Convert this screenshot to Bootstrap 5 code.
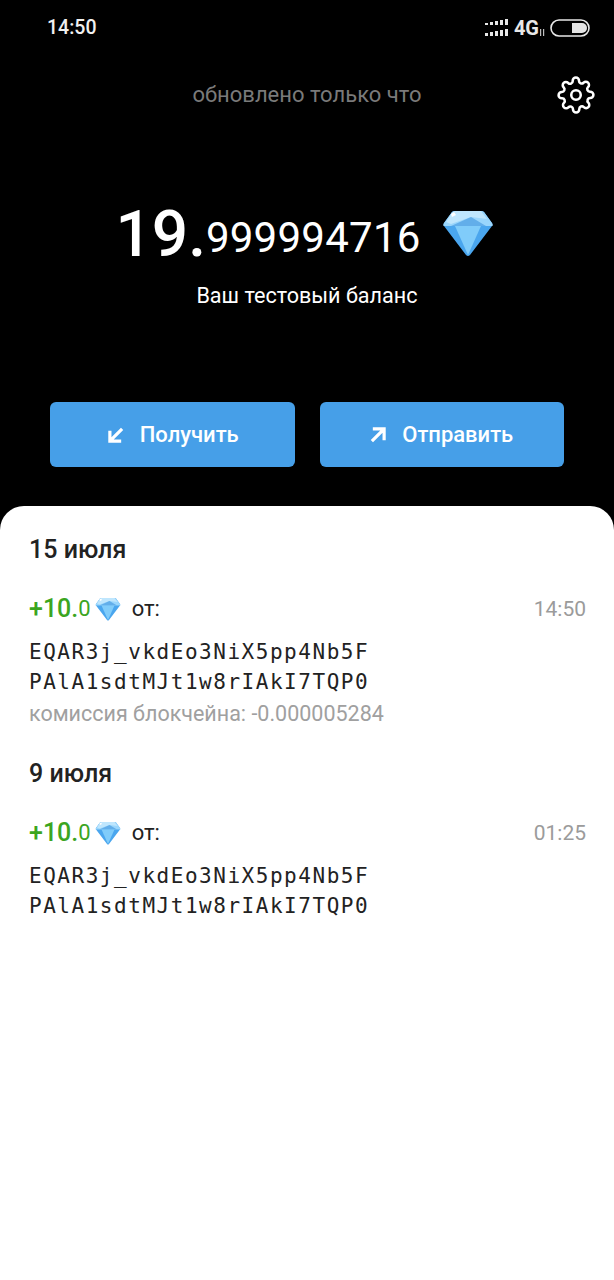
<!DOCTYPE html>
<html lang="ru">
<head>
  <meta charset="UTF-8" />
  <meta name="viewport" content="width=device-width, initial-scale=1.0" />
  <title>Wallet</title>
  <link rel="stylesheet" href="https://cdn.jsdelivr.net/npm/bootstrap@5.3.0/dist/css/bootstrap.min.css" />
  <style>
    html, body { background: #fff; }
    body { font-family: Roboto, "Liberation Sans", sans-serif; width: 614px; height: 1280px; overflow: hidden; }
    .wallet-top { background: #000; height: 530px; color: #fff; }
    .status-row { height: 56px; padding: 0 24px 0 47px; }
    .status-time { font-size: 19.5px; font-weight: 500; line-height: 56px; color: #f0f0f0; }
    .status-net { font-size: 20px; font-weight: 700; color: #e8e8e8; line-height: 1; margin-left: 5px; }
    .updated-row { height: 78px; display: grid; grid-template-columns: 1fr auto 1fr; padding: 0 19px; }
    .updated-text { font-size: 22px; line-height: 78px; color: #7a7a7a; }
    .balance-row { margin-top: 65px; height: 72px; padding-right: 5px; }
    .balance-big { font-size: 64px; line-height: 72px; font-weight: 500; }
    .balance-small { font-size: 42px; line-height: 72px; margin-top: 5px; letter-spacing: .25px; }
    .balance-gem { margin-left: 21px; margin-top: -4px; }
    .balance-label { font-size: 21.6px; line-height: 28px; margin-top: 11px; }
    .action-row { margin: 92px 50px 0; gap: 25px; }
    .action-btn { flex: none; width: 244.5px; height: 65px; background: #469fe8; border: 0; border-radius: 6px; color: #fff; font-size: 22px; font-weight: 500; }
    .action-btn:hover { background: #469fe8; color: #fff; }
    .action-recv { padding-left: 14px; }
    .wallet-sheet { background: #fff; margin-top: -24px; height: 774px; border-radius: 24px 24px 0 0; padding: 27px 28px 0 29px; position: relative; }
    .day-title { font-size: 25px; font-weight: 500; line-height: 34px; color: #222; margin: 0; }
    .tx-head { margin-top: 25px; height: 34px; line-height: 34px; font-size: 22px; color: #222; }
    .tx-plus { color: #3ba51f; font-size: 25px; font-weight: 500; }
    .tx-frac { color: #3ba51f; font-size: 22px; }
    .tx-gem { margin-left: 4px; margin-right: 11px; }
    .tx-time { color: #9b9b9b; font-size: 21px; }
    .tx-addr { font-family: "DejaVu Sans Mono", "Liberation Mono", monospace; font-size: 21px; line-height: 30px; letter-spacing: 1.53px; color: #222; margin-top: 11px; }
    .tx-fee { font-size: 21.5px; line-height: 30px; color: #a0a0a0; margin-top: 2px; }
    .second-day { margin-top: 28px; }
  </style>
</head>
<body>

<svg width="0" height="0" class="d-block">
  <symbol id="gem" viewBox="0 0 52 48">
    <path d="M13 2H39Q41 2 42 3L50 14Q51 16 50 17L28 46Q26 48 24 46L2 17Q1 16 2 14L10 3Q11 2 13 2Z" fill="#4aa6ee" />
    <path d="M13 2H39Q41 2 42 3L50 14Q51 15 50.5 17H1.5Q1 15 2 14L10 3Q11 2 13 2Z" fill="#9ad6fc" />
    <path d="M13 2H39L45 10 29 8 9 15 4 13 10 4Z" fill="#bfe6fd" />
    <path d="M9 17 29 8 44 17Z" fill="#62aeea" />
    <path d="M13 17H39L26 46Z" fill="#80ccfa" />
    <path d="M9 5 12 3 14 6 10 8Z" fill="#fff" />
  </symbol>
</svg>

<div class="wallet-top">
  <div class="status-row d-flex justify-content-between align-items-center">
    <span class="status-time">14:50</span>
    <div class="d-flex align-items-center">
      <svg width="24" height="18" viewBox="0 0 24 18" fill="#e8e8e8">
        <rect x="0" y="4" width="3" height="2"/><rect x="5" y="3" width="3" height="3"/><rect x="10" y="2" width="3" height="4"/><rect x="15" y="1" width="3" height="5"/><rect x="20" y="0" width="3" height="6"/>
        <rect x="0" y="14" width="3" height="3"/><rect x="5" y="13" width="3" height="4"/><rect x="10" y="12" width="3" height="5"/><rect x="15" y="11" width="3" height="6"/><rect x="20" y="10" width="3" height="7"/>
      </svg>
      <span class="status-net">4G</span>
      <svg width="7" height="9" viewBox="0 0 7 9" class="mt-2" fill="#bdbdbd"><rect x="1" y="1" width="1.2" height="7"/><rect x="4" y="1" width="1.2" height="7"/></svg>
      <svg width="40" height="18" viewBox="0 0 40 18" class="ms-1">
        <rect x="1" y="1" width="38" height="16" rx="8" fill="none" stroke="#e8e8e8" stroke-width="1.6"/>
        <path d="M22 4H32A5 5 0 0 1 32 14H22Z" fill="#e4e4e4"/>
      </svg>
    </div>
  </div>

  <div class="updated-row">
    <span></span>
    <span class="updated-text">обновлено только что</span>
    <div class="d-flex justify-content-end align-items-center">
      <svg width="38" height="38" viewBox="0 0 24 24" fill="none" stroke="#fff" stroke-width="1.6" stroke-linecap="round" stroke-linejoin="round">
        <circle cx="12" cy="12" r="3"/>
        <path d="M19.4 15a1.65 1.65 0 0 0 .33 1.82l.06.06a2 2 0 1 1-2.83 2.83l-.06-.06a1.65 1.65 0 0 0-2.82 1.17V21a2 2 0 1 1-4 0v-.09A1.65 1.65 0 0 0 7.26 19.74l-.06.06a2 2 0 1 1-2.83-2.83l.06-.06a1.65 1.65 0 0 0-1.17-2.82H3a2 2 0 1 1 0-4h.09A1.65 1.65 0 0 0 4.26 7.27l-.06-.06a2 2 0 1 1 2.83-2.83l.06.06a1.65 1.65 0 0 0 2.82-1.17V3a2 2 0 1 1 4 0v.09a1.65 1.65 0 0 0 2.82 1.17l.06-.06a2 2 0 1 1 2.83 2.83l-.06.06a1.65 1.65 0 0 0 1.17 2.82H21a2 2 0 1 1 0 4h-.09a1.65 1.65 0 0 0-1.51 1Z"/>
      </svg>
    </div>
  </div>

  <div class="balance-row d-flex justify-content-center align-items-center">
    <span class="balance-big">19.</span><span class="balance-small">999994716</span>
    <svg width="52" height="48" class="balance-gem"><use href="#gem"/></svg>
  </div>
  <div class="balance-label text-center">Ваш тестовый баланс</div>

  <div class="action-row d-flex">
    <button type="button" class="btn action-btn action-recv d-flex align-items-center justify-content-center gap-3">
      <svg width="16" height="16" viewBox="0 0 17 17" fill="none" stroke="#fff" stroke-width="3.4"><path d="M15 2 3 14M2 4V15H14"/></svg>
      Получить
    </button>
    <button type="button" class="btn action-btn d-flex align-items-center justify-content-center gap-3">
      <svg width="16" height="16" viewBox="0 0 17 17" fill="none" stroke="#fff" stroke-width="3.4"><path d="M2 15 14 3M3 2H15V14"/></svg>
      Отправить
    </button>
  </div>
</div>

<div class="wallet-sheet">
  <h5 class="day-title">15 июля</h5>
  <div class="tx-head d-flex justify-content-between">
    <div class="d-flex align-items-center">
      <span class="tx-plus">+10.</span><span class="tx-frac">0</span>
      <svg width="26" height="24" class="tx-gem"><use href="#gem"/></svg>
      <span>от:</span>
    </div>
    <span class="tx-time">14:50</span>
  </div>
  <div class="tx-addr">EQAR3j_vkdEo3NiX5pp4Nb5F<br />PAlA1sdtMJt1w8rIAkI7TQP0</div>
  <div class="tx-fee">комиссия блокчейна: -0.000005284</div>

  <h5 class="day-title second-day">9 июля</h5>
  <div class="tx-head d-flex justify-content-between">
    <div class="d-flex align-items-center">
      <span class="tx-plus">+10.</span><span class="tx-frac">0</span>
      <svg width="26" height="24" class="tx-gem"><use href="#gem"/></svg>
      <span>от:</span>
    </div>
    <span class="tx-time">01:25</span>
  </div>
  <div class="tx-addr">EQAR3j_vkdEo3NiX5pp4Nb5F<br />PAlA1sdtMJt1w8rIAkI7TQP0</div>
</div>

<script src="https://cdn.jsdelivr.net/npm/bootstrap@5.3.0/dist/js/bootstrap.bundle.min.js"></script>
</body>
</html>
